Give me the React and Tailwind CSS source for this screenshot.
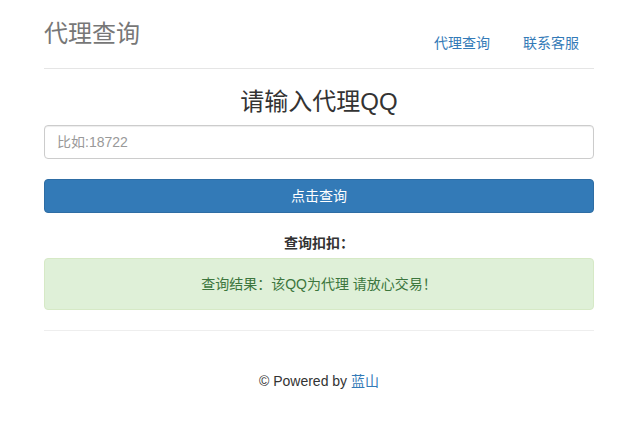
import React, { useState } from 'react';

const App = () => {
  const [qq, setQq] = useState('');

  return (
    <div
      className="min-h-screen bg-white text-[14px] leading-5 text-[#333]"
      style={{ fontFamily: '"Liberation Sans", "Noto Sans CJK SC", sans-serif' }}
    >
      <div className="ml-[44px] w-[550px] pt-[14px]">
        <div className="flex justify-between items-start pb-[5px] border-b border-[#e5e5e5]">
          <h3 className="text-[24px] leading-[40px] text-[#777] font-normal">代理查询</h3>
          <ul className="flex mt-[9px]">
            <li>
              <a href="#" className="block px-[15px] py-[10px] text-[#337ab7]">代理查询</a>
            </li>
            <li className="ml-[3px]">
              <a href="#" className="block px-[15px] py-[10px] text-[#337ab7]">联系客服</a>
            </li>
          </ul>
        </div>

        <h3 className="mt-5 mb-[10px] text-center text-[24px] leading-[26px] font-normal text-[#333]">
          请输入代理QQ
        </h3>
        <input
          type="text"
          value={qq}
          onChange={(e) => setQq(e.target.value)}
          placeholder="比如:18722"
          className="block w-full h-[34px] px-3 border border-[#ccc] rounded-[4px] text-[14px] text-[#555] placeholder:text-[#999] shadow-[inset_0_1px_1px_rgba(0,0,0,0.075)] outline-none"
        />
        <button className="mt-5 w-full h-[34px] bg-[#337ab7] border border-[#2e6da4] rounded-[4px] text-white text-[14px]">
          点击查询
        </button>

        <div className="mt-5 text-center font-bold">查询扣扣：</div>
        <div className="mt-[5px] p-[15px] bg-[#dff0d8] border border-[#d6e9c6] rounded-[4px] text-center text-[#3c763d]">
          查询结果：该QQ为代理 请放心交易！
        </div>

        <hr className="mt-5 border-0 border-t border-[#eee]" />

        <footer className="pt-10 text-center text-[#333]">
          © Powered by <a href="#" className="text-[#337ab7]">蓝山</a>
        </footer>
      </div>
    </div>
  );
};

export default App;
